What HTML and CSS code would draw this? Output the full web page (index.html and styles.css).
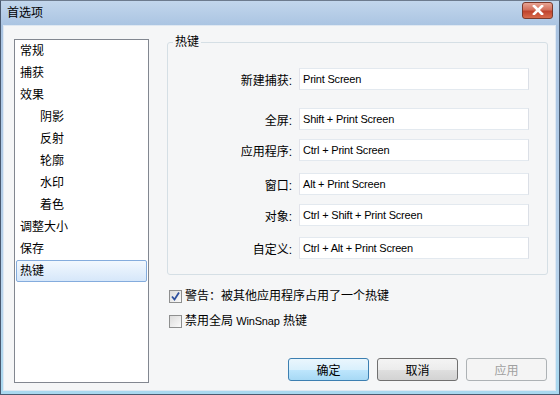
FILE: index.html
```html
<!DOCTYPE html>
<html lang="zh-CN">
<head>
  <meta charset="UTF-8" />
  <title>首选项</title>
  <link rel="stylesheet" href="styles.css">
</head>
<body>
  <div class="window">
    <div class="titlebar">
      <span class="title">首选项</span>
      <span class="close">
        <svg width="12" height="10" viewBox="0 0 12 10">
          <path d="M2 1 L10 9 M10 1 L2 9" stroke="#fff" stroke-width="2.6" stroke-linecap="square"/>
        </svg>
      </span>
    </div>

    <div class="client">
      <ul class="nav">
        <li>常规</li>
        <li>捕获</li>
        <li>效果</li>
        <li class="sub">阴影</li>
        <li class="sub">反射</li>
        <li class="sub">轮廓</li>
        <li class="sub">水印</li>
        <li class="sub">着色</li>
        <li>调整大小</li>
        <li>保存</li>
        <li class="selected">热键</li>
      </ul>

      <div class="panel">
        <fieldset class="group">
          <legend>热键</legend>
          <div class="row first">
            <label>新建捕获:</label>
            <div class="field">Print Screen</div>
          </div>
          <div class="row r2">
            <label>全屏:</label>
            <div class="field">Shift + Print Screen</div>
          </div>
          <div class="row r3">
            <label>应用程序:</label>
            <div class="field">Ctrl + Print Screen</div>
          </div>
          <div class="row r4">
            <label>窗口:</label>
            <div class="field">Alt + Print Screen</div>
          </div>
          <div class="row r5">
            <label>对象:</label>
            <div class="field">Ctrl + Shift + Print Screen</div>
          </div>
          <div class="row r6">
            <label>自定义:</label>
            <div class="field">Ctrl + Alt + Print Screen</div>
          </div>
        </fieldset>

        <div class="check first">
          <span class="box">
            <svg width="11" height="11" viewBox="0 0 11 11">
              <path d="M2 5.5 L4.5 8.5 L9 1.5" fill="none" stroke="#2c4f9e" stroke-width="1.8"/>
            </svg>
          </span>
          <span>警告：被其他应用程序占用了一个热键</span>
        </div>
        <div class="check">
          <span class="box"></span>
          <span>禁用全局 <span class="latin">WinSnap</span> 热键</span>
        </div>

        <div class="buttons">
          <button class="default">确定</button>
          <button>取消</button>
          <button class="disabled">应用</button>
        </div>
      </div>
    </div>
  </div>
</body>
</html>
```

FILE: styles.css
```css
* {
  box-sizing: border-box;
}

body {
  margin: 0;
  font-family: "Liberation Sans", "Noto Sans CJK SC", sans-serif;
  font-size: 12px;
  color: #000;
}

.window {
  width: 560px;
  height: 395px;
  border: 1px solid #4a5a70;
  border-top-color: #6d7b8e;
  background: linear-gradient(#c2d6ec, #aac4e2 25px, #b9d4ec 300px, #a9d9f0);
  padding: 0 3px 3px 2px;
  display: flex;
  flex-direction: column;
}

.titlebar {
  height: 24px;
  display: flex;
  align-items: center;
  justify-content: space-between;
  padding: 0 3px 0 4px;
}

.title {
  font-size: 12px;
  line-height: 14px;
}

.close {
  width: 31px;
  height: 17px;
  margin-top: -6px;
  border: 1px solid #7b3a2c;
  border-radius: 3px;
  background: linear-gradient(#e8a494, #d2705c 45%, #bf432d 55%, #d86b4c);
  display: flex;
  align-items: center;
  justify-content: center;
}

.client {
  flex: 1;
  background: #f5f6f7;
  border: 1px solid #dfe8f2;
  display: flex;
  padding: 12px 0 0 10px;
}

.nav {
  list-style: none;
  margin: 0;
  padding: 0 1px;
  width: 135px;
  height: 344px;
  margin-top: 1px;
  border: 1px solid #828790;
  background: #fff;
}

.nav li {
  height: 22px;
  line-height: 22px;
  padding-left: 4px;
}

.nav li.sub {
  padding-left: 24px;
}

.nav li.selected {
  border: 1px solid #84acdd;
  border-radius: 2px;
  background: linear-gradient(#f2f8fe, #d6e7fa);
  line-height: 20px;
  padding-left: 3px;
}

.panel {
  margin-left: 18px;
  width: 381px;
  display: flex;
  flex-direction: column;
}

.group {
  margin: -4px 0 0;
  padding: 0 18px 15px 0;
  border: 1px solid #d5dfe5;
  border-radius: 3px;
  min-width: 0;
}

.group legend {
  margin-left: 5px;
  padding: 0 2px;
  line-height: 16px;
}

.row {
  display: flex;
  align-items: center;
}

.row label {
  width: 125px;
  text-align: right;
  padding-right: 1px;
}

.row.first { margin-top: 18px; }
.row.r2 { margin-top: 18px; }
.row.r3 { margin-top: 9px; }
.row.r4 { margin-top: 12px; }
.row.r5 { margin-top: 9px; }
.row.r6 { margin-top: 11px; }

.field {
  margin-left: 6px;
  width: 230px;
  height: 22px;
  border: 1px solid #abadb3;
  border-top-color: #e3e9ef;
  border-left-color: #e2e3ea;
  border-right-color: #dbdfe6;
  border-bottom-color: #e3e9ef;
  background: #fff;
  font-size: 11px;
  letter-spacing: -0.2px;
  line-height: 20px;
  padding-left: 3px;
}

.check {
  display: flex;
  align-items: center;
  height: 13px;
  margin-left: 2px;
  margin-top: 12px;
  gap: 3px;
  line-height: 13px;
}

.check.first {
  margin-top: 15px;
}

.box {
  width: 13px;
  height: 13px;
  border: 1px solid #8e8f8f;
  background: linear-gradient(135deg, #dcdcdc, #fafafa);
  display: flex;
  align-items: center;
  justify-content: center;
}

.latin {
  font-size: 11px;
  letter-spacing: -0.2px;
}

.buttons {
  display: flex;
  justify-content: flex-end;
  gap: 8px;
  margin-top: 30px;
  padding-right: 1px;
}

button {
  font-family: "Liberation Sans", "Noto Sans CJK SC", sans-serif;
  font-size: 12px;
  width: 81px;
  height: 23px;
  padding: 0;
  border: 1px solid #707070;
  border-radius: 3px;
  background: linear-gradient(#f4f4f4, #ececec 50%, #dfdfdf 51%, #d3d3d3);
  color: #000;
}

button.default {
  border-color: #3c7fb1;
  background: linear-gradient(#eaf6fd, #d9f0fc 50%, #bee6fd 51%, #a7d9f5);
}

button.disabled {
  border-color: #adb2b5;
  background: #f4f4f4;
  color: #a0a0a0;
}
```
